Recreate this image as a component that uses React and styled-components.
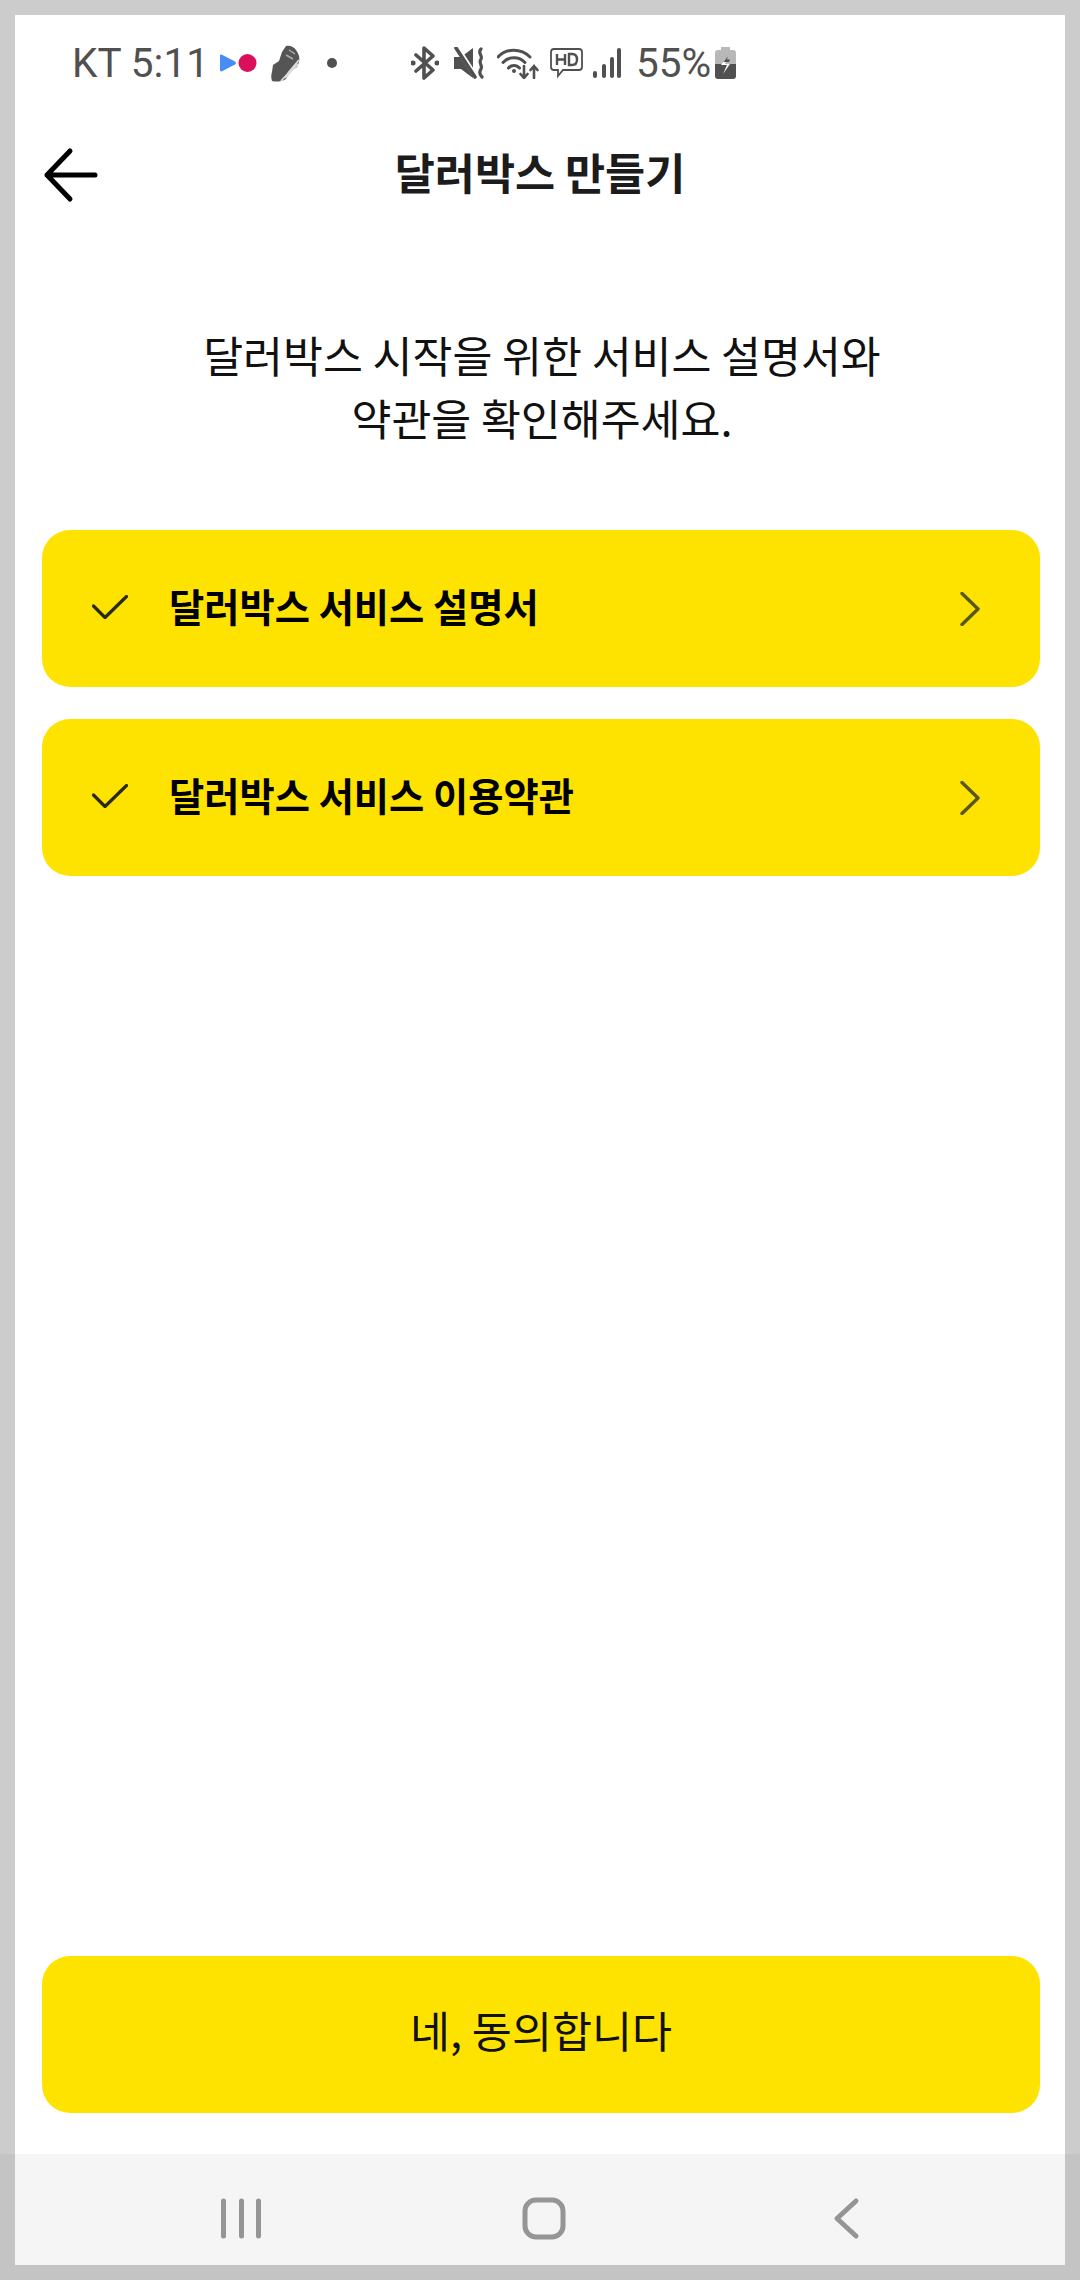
import React from "react";
import styled, { createGlobalStyle } from "styled-components";

const Global = createGlobalStyle`
  html, body { margin: 0; padding: 0; background: #ccc; }
  * { box-sizing: border-box; }
`;

const KR = `"Noto Sans CJK KR", "Noto Sans", sans-serif`;

const Frame = styled.div`
  width: 1080px;
  height: 2280px;
  padding: 15px;
  background: linear-gradient(to bottom, #cccccc 0, #cccccc 2154px, #c4c4c4 2154px, #c4c4c4 100%);
`;
const Screen = styled.div`
  height: 100%;
  background: #fff;
  display: flex;
  flex-direction: column;
`;
const StatusBar = styled.div`
  height: 96px;
  padding-left: 57px;
  display: flex;
  align-items: center;
  color: #505050;
  font: 400 40.5px Roboto, sans-serif;
  flex: none;
`;
const StatusText = styled.span`
  margin-left: ${p => p.$ml || 0}px;
  line-height: 1;
  white-space: nowrap;
`;
const StatusGap = styled.span`
  flex: none;
  width: ${p => p.$w}px;
`;
const StatusIcon = styled.svg`
  display: block;
  flex: none;
  margin-left: ${p => p.$ml || 0}px;
`;
const Header = styled.header`
  height: 128px;
  flex: none;
  display: grid;
  grid-template-columns: 1fr auto 1fr;
  align-items: center;
  padding-left: 28px;
`;
const Title = styled.h1`
  margin: 0 0 0 -28px;
  padding-bottom: 7px;
  font: 700 43.6px/1.2 ${KR};
  color: #1c1c1c;
  white-space: nowrap;
`;
const Intro = styled.p`
  margin: 84px 0 81px;
  padding-left: 4px;
  font: 400 43.4px/63px ${KR};
  color: #111;
  text-align: center;
`;
const List = styled.div`
  display: flex;
  flex-direction: column;
  gap: 32px;
  padding: 0 25px 0 27px;
`;
const Row = styled.div`
  height: 157px;
  border-radius: 28px;
  background: #ffe300;
  display: flex;
  align-items: center;
  padding: 0 60px 0 50px;
`;
const CheckMark = styled.svg`
  display: block;
  flex: none;
  margin-bottom: 3px;
`;
const RowLabel = styled.span`
  margin-left: 41px;
  padding-bottom: 5px;
  flex: 1;
  font: 700 38.3px/1.2 ${KR};
  color: #000;
  white-space: nowrap;
`;
const Footer = styled.div`
  margin-top: auto;
  padding: 0 25px 41px 27px;
`;
const Agree = styled.button`
  width: 100%;
  height: 157px;
  border: 0;
  border-radius: 28px;
  background: #ffe300;
  font: 400 43.5px/1.2 ${KR};
  color: #111;
  padding: 0 0 8px;
`;
const NavBar = styled.nav`
  height: 111px;
  flex: none;
  background: #f5f5f5;
`;
const NavSvg = styled.svg`
  display: block;
`;

const Bluetooth = () => (
  <StatusIcon width="28" height="34" viewBox="0 0 28 34" fill="none" stroke="#505050" strokeWidth="3.6" strokeLinejoin="round" strokeLinecap="round">
    <path d="M5 9 L22 24 L13 32 V2 L22 10 L5 25" />
    <path d="M2 17 h0.1 M26 17 h0.1" strokeWidth="5" />
  </StatusIcon>
);
const Mute = () => (
  <StatusIcon $ml={15} width="31" height="32" viewBox="0 0 31 32" fill="none">
    <path d="M0 10 H7 L19 1 V31 L7 22 H0Z" fill="#505050" />
    <path d="M2 -1 L24 33" stroke="#fff" strokeWidth="5" />
    <path d="M2 1 L21 30" stroke="#505050" strokeWidth="3.6" strokeLinecap="round" />
    <path d="M27 2 C23 6 29 8 27 12 C24 16 29 18 27 22 C25 25 26 28 28 30" stroke="#505050" strokeWidth="3.2" strokeLinecap="round" />
  </StatusIcon>
);
const Wifi = () => (
  <StatusIcon $ml={12} width="42" height="32" viewBox="0 0 42 32" fill="none" stroke="#505050" strokeWidth="3" strokeLinecap="round">
    <path d="M1 10 C9 1 24 1 33 10" />
    <path d="M6 15.5 C12 9 22 9 28 15.5" />
    <path d="M11.500 21 C14.500 17.500 19.500 17.500 22.500 21" />
    <circle cx="17" cy="24" r="2" fill="#505050" stroke="none" />
    <path d="M27 19 V31 M23.500 27 L27 31 L30.500 27" strokeWidth="2.600" />
    <path d="M37 31 V19 M33.500 23 L37 19 L40.500 23" strokeWidth="2.600" />
  </StatusIcon>
);
const HdBadge = () => (
  <StatusIcon $ml={11} width="33" height="30" viewBox="0 0 33 30" fill="none">
    <path d="M4 1 H29 Q32 1 32 4 V19 Q32 22 29 22 H13 L8 28 V22 H4 Q1 22 1 19 V4 Q1 1 4 1Z" stroke="#505050" strokeWidth="1.800" />
    <path d="M7 6 V17 M15 6 V17 M7 11.500 H15" stroke="#505050" strokeWidth="2.400" />
    <path d="M19 6 V17 H22 Q27 17 27 11.500 Q27 6 22 6Z" stroke="#505050" strokeWidth="2.400" />
  </StatusIcon>
);
const Signal = () => (
  <StatusIcon $ml={10} width="28" height="30" viewBox="0 0 28 30" fill="#505050">
    <rect x="0" y="23" width="4" height="7" rx="2" />
    <rect x="9" y="16" width="4" height="14" rx="2" />
    <rect x="17" y="9" width="4" height="21" rx="2" />
    <rect x="24" y="0" width="4" height="30" rx="2" />
  </StatusIcon>
);
const Battery = () => (
  <StatusIcon $ml={4} width="21" height="32" viewBox="0 0 21 32">
    <path d="M6 0 H15 V3 H18 Q21 3 21 6 V17 H0 V6 Q0 3 3 3 H6Z" fill="#b8b8b8" />
    <path d="M0 17 H21 V29 Q21 32 18 32 H3 Q0 32 0 29Z" fill="#505050" />
    <path d="M13 9 L6 18 H12 L8 27 L15 17 H10Z" fill="#fff" />
    <path d="M13 9 L8.500 15 H14 L15 12.500 H12Z" fill="#505050" />
  </StatusIcon>
);
const Shoe = () => (
  <StatusIcon $ml={14} width="30" height="37" viewBox="0 0 30 37">
    <path d="M15 1 C19 0 23 2 25 5 C28 9 29 13 28 17 L26 22 L19 27 L15 34 C10 37 5 37 1 36 C0 33 0 30 1 27 L2 20 L8 16 L11 7Z" fill="#555" />
    <path d="M10 36 L22 23 M14 33 L27 19 M17 28 L28 15" stroke="#ddd" strokeWidth="1.800" />
    <path d="M18 5 L24 9 M15 10 L22 14" stroke="#aaa" strokeWidth="1.500" />
  </StatusIcon>
);
const AppDots = () => (
  <StatusIcon $ml={11} width="37" height="18" viewBox="0 0 37 18">
    <path d="M0 2 Q0 0 2 0.800 L15 7.500 Q17 9 15 10.500 L2 17.200 Q0 18 0 16Z" fill="#4a8cf5" />
    <circle cx="27.500" cy="9" r="9" fill="#dc0f5c" />
  </StatusIcon>
);
const NotifDot = () => (
  <StatusIcon $ml={26} width="10" height="10" viewBox="0 0 10 10">
    <circle cx="5" cy="5" r="5" fill="#505050" />
  </StatusIcon>
);

const BackArrow = () => (
  <svg width="56" height="56" viewBox="0 0 56 56" fill="none" stroke="#000" strokeWidth="5" strokeLinecap="round" strokeLinejoin="round">
    <path d="M4 28 H52 M27 4 L4 28 L27 52" />
  </svg>
);
const Check = () => (
  <CheckMark width="36" height="24" viewBox="0 0 36 24" fill="none" stroke="#2a2a10" strokeWidth="3.2" strokeLinecap="round" strokeLinejoin="round">
    <path d="M1.500 11 L13 22.500 L34.500 1.500" />
  </CheckMark>
);
const Chevron = () => (
  <svg width="20" height="34" viewBox="0 0 20 34" fill="none" stroke="#5a5620" strokeWidth="3.4" strokeLinecap="round" strokeLinejoin="round">
    <path d="M2 1.500 L18 17 L2 32.500" />
  </svg>
);
const NavIcons = () => (
  <NavSvg width="1050" height="111" viewBox="0 0 1050 111" fill="none" stroke="#959595" strokeLinecap="round" strokeLinejoin="round">
    <path d="M208.500 47 V82 M226.500 47 V82 M243.500 47 V82" strokeWidth="5" />
    <rect x="510" y="46" width="38" height="37" rx="11" strokeWidth="5" />
    <path d="M841 47 L822 64.500 L841 82" strokeWidth="5" />
  </NavSvg>
);

const items = ["달러박스 서비스 설명서", "달러박스 서비스 이용약관"];

export default function App() {
  return (
    <Frame>
      <Global />
      <Screen>
        <StatusBar>
          <StatusText>KT 5:11</StatusText>
          <AppDots />
          <Shoe />
          <NotifDot />
          <StatusGap $w={74} />
          <Bluetooth />
          <Mute />
          <Wifi />
          <HdBadge />
          <Signal />
          <StatusText $ml={15}>55%</StatusText>
          <Battery />
        </StatusBar>
        <Header>
          <BackArrow />
          <Title>달러박스 만들기</Title>
        </Header>
        <Intro>
          달러박스 시작을 위한 서비스 설명서와
          <br />
          약관을 확인해주세요.
        </Intro>
        <List>
          {items.map(t => (
            <Row key={t}>
              <Check />
              <RowLabel>{t}</RowLabel>
              <Chevron />
            </Row>
          ))}
        </List>
        <Footer>
          <Agree>네, 동의합니다</Agree>
        </Footer>
        <NavBar>
          <NavIcons />
        </NavBar>
      </Screen>
    </Frame>
  );
}
